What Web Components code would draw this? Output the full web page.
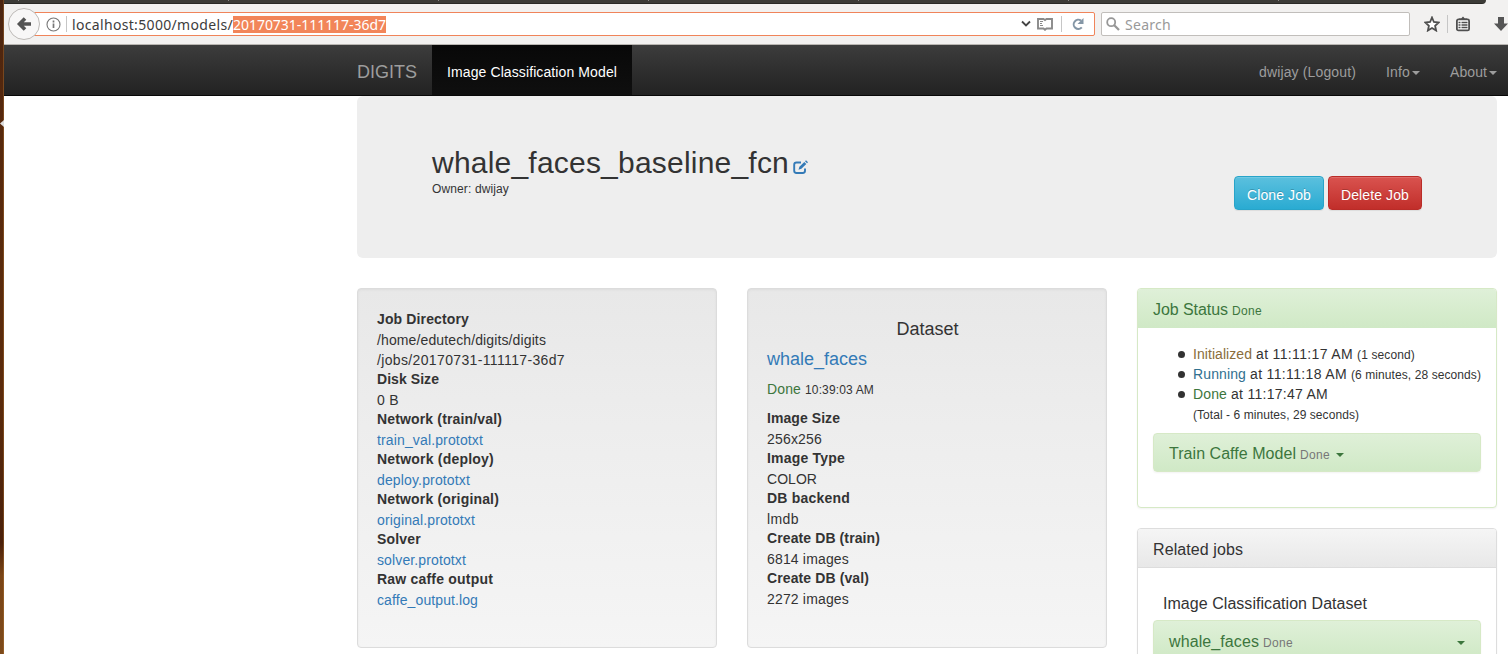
<!DOCTYPE html>
<html lang="en">
<head>
<meta charset="utf-8">
<title>whale_faces_baseline_fcn</title>
<style>
html,body{margin:0;height:100%;overflow:hidden;background:#fff}
body{font:14px/20px "Liberation Sans",Arial,sans-serif;color:#333}
</style>
</head>
<body>
<digits-window></digits-window>
<script>
function define(name, html, after) {
  const t = document.createElement('template');
  t.innerHTML = html;
  customElements.define(name, class extends HTMLElement {
    constructor() {
      super();
      this.attachShadow({mode: 'open'}).append(t.content.cloneNode(true));
    }
    connectedCallback() { if (after) after(this); }
  });
}

// A single-line label tracked to occupy the width in its "w" attribute.
define('ui-text', `<style>:host{display:inline-block;white-space:pre}span{display:inline-block}</style><span><slot></slot></span>`, el => {
  const w = parseFloat(el.getAttribute('w'));
  const span = el.shadowRoot.querySelector('span');
  const n = el.textContent.length;
  if (!w || !n) return;
  span.style.letterSpacing = ((w - span.getBoundingClientRect().width) / n) + 'px';
  el.style.width = w + 'px';
});

define('ui-caret', `<style>:host{display:inline-block;width:0;height:0;border:4px solid transparent;border-top-color:currentColor;border-bottom:0;vertical-align:middle;flex:none}</style>`);

define('browser-bar', `<style>
:host{display:block;height:45px;background:#f2f1f0;box-sizing:border-box;border-bottom:1px solid #b9b6b2;font:14px/18px "Noto Sans","Open Sans",sans-serif;color:#3c3c3c}
.tabs{height:4px;width:1482px;background:repeating-linear-gradient(90deg,transparent 0 14px,#8a8984 14px 15px,transparent 15px 210px) 0 0/100% 1px no-repeat,linear-gradient(#3c3b37 0 3px,#2a2926 3px);border-radius:0 0 7px 0}
.row{display:flex;align-items:center;height:40px;overflow:hidden}
.back{width:30px;height:30px;border:1px solid #bdbab7;border-radius:50%;background:#f8f7f7;margin-left:4px;flex:none;z-index:1;display:grid;place-items:center}
.url{box-sizing:border-box;width:1063px;margin-left:-8px;height:24px;border:1px solid #f0845a;border-radius:0 2px 2px 0;background:#fff;display:flex;align-items:center;padding-left:13px;flex:none}
.sep{width:1px;height:16px;background:#c6c6c6;flex:none}
.txt{display:flex;margin-left:5px;width:946px;flex:none}
.sel{background:#f28559;color:#fff;height:17px;line-height:17px;display:block}
.pre{height:17px;line-height:17px}
.search{box-sizing:border-box;width:309px;height:24px;border:1px solid #c1bebb;border-radius:2px;background:#fff;margin-left:6px;display:flex;align-items:center;padding-left:4px;color:#999;flex:none}
svg{display:block;flex:none}
</style>
<div class="tabs"></div>
<div class="row">
 <div class="back"><svg width="16" height="16" viewBox="0 0 16 16"><path d="M15 8H4.500M9 2.500 3.500 8 9 13.500" fill="none" stroke="#545454" stroke-width="3.600"/></svg></div>
 <div class="url">
  <svg width="15" height="15" viewBox="0 0 15 15" fill="none" stroke="#777"><circle cx="7.5" cy="7.5" r="6.5" stroke-width="1.1"/><path d="M7.5 6.5V11M7.5 3.5v2" stroke-width="1.7"/></svg>
  <i class="sep" style="margin-left:5px"></i>
  <div class="txt"><ui-text class="pre" w="161">localhost:5000/models/</ui-text><ui-text class="sel" w="153">20170731-111117-36d7</ui-text></div>
  <svg style="margin-left:3px" width="10" height="8" viewBox="0 0 10 8"><path d="M1 1.500 5 5.500 9 1.500" fill="none" stroke="#444" stroke-width="1.800"/></svg>
  <svg style="margin-left:6px" width="16" height="14" viewBox="0 0 16 14" fill="none" stroke="#8a8a8a"><path d="M1 2H6.500L8 3 9.500 2H15V11.500H9.500L8 12.800 6.500 11.500H1Z" stroke-width="1.900"/><path d="M3 4.500h3M3 6.500h2M3 8.500h3" stroke-width="1"/></svg>
  <i class="sep" style="margin-left:8px"></i>
  <svg style="margin-left:9px" width="14" height="14" viewBox="0 0 14 14"><path d="M10.800 10.300A4.600 4.600 0 1 1 10 3.600" fill="none" stroke="#8496a6" stroke-width="2"/><path d="M12.500 1v6H6.500Z" fill="#8496a6"/></svg>
 </div>
 <div class="search"><svg width="14" height="14" viewBox="0 0 14 14" fill="none" stroke="#979797"><circle cx="5.200" cy="5.200" r="4" stroke-width="1.800"/><path d="m8 8 5 5" stroke-width="2.300"/></svg><ui-text w="46" style="margin-left:5px;padding-top:1px">Search</ui-text></div>
 <svg style="margin-left:14px" width="16" height="16" viewBox="0 0 16 16"><path d="m8 1.500 1.900 4.500 4.800.5-3.600 3.300 1 4.700L8 12l-4.100 2.500 1-4.700L1.300 6.500l4.800-.5Z" fill="#fff" stroke="#4f4f4f" stroke-width="1.800"/></svg>
 <i class="sep" style="margin-left:7px;height:18px"></i>
 <svg style="margin-left:8px" width="14" height="16" viewBox="0 0 14 16"><rect x=".9" y="3.400" width="12.200" height="11" rx="1.500" fill="#fff" stroke="#4f4f4f" stroke-width="1.800"/><path d="M3 4V2.500H5.200L7 .5 8.800 2.500H11V4Z" fill="#4f4f4f"/><path d="M2.500 6.500h2M5.500 6.500h6M2.500 9h2M5.500 9h6M2.500 11.500h2M5.500 11.500h6" stroke="#4f4f4f" stroke-width="1.300"/></svg>
 <svg style="margin-left:24px" width="14" height="16" viewBox="0 0 14 16"><path d="M4 1h6v6.500h4L7 15 0 7.500h4Z" fill="#555"/></svg>
</div>`);

define('nav-bar', `<style>
:host{display:flex;height:50px;border-bottom:1px solid #080808;background:linear-gradient(#3c3c3c,#222);color:#9d9d9d;padding-left:353px}
div{padding-top:17px;box-sizing:border-box;height:50px}
.brand{font-size:18px;width:75px}
.tab{width:200px;padding-left:15px;background:linear-gradient(#080808,#0f0f0f);color:#fff}
.user{margin-left:627px;width:127px}.info{width:64px}
ui-caret{margin-left:2px;vertical-align:2px}
</style>
<div class="brand"><ui-text w="60">DIGITS</ui-text></div>
<div class="tab"><ui-text w="170">Image Classification Model</ui-text></div>
<div class="user"><ui-text w="97">dwijay (Logout)</ui-text></div>
<div class="info"><ui-text w="24">Info</ui-text><ui-caret></ui-caret></div>
<div><ui-text w="37">About</ui-text><ui-caret></ui-caret></div>`);

define('job-button', `<style>
:host{display:block;box-sizing:border-box;height:34px;padding:8px 12px 4px;border:1px solid #28a4c9;border-radius:4px;background:linear-gradient(#5bc0de,#2aabd2);color:#fff;text-shadow:0 -1px 0 rgba(0,0,0,.2);box-shadow:inset 0 1px 0 rgba(255,255,255,.15),0 1px 1px rgba(0,0,0,.075);line-height:20px;white-space:nowrap}
:host([kind=danger]){border-color:#b92c28;background:linear-gradient(#d9534f,#c12e2a)}
</style><slot></slot>`);

define('job-header', `<style>
:host{display:flex;justify-content:space-between;box-sizing:border-box;height:162px;border-radius:6px;background:#eee;padding:50px 75px 0}
h2{margin:0;font-size:30px;line-height:33px;font-weight:400;display:flex}
svg{margin:14px 0 0 4px}
small{font-size:12px;display:block;line-height:20px}
.b{display:flex;gap:4px;padding-top:30px}
</style>
<div><h2><ui-text w="357">whale_faces_baseline_fcn</ui-text><svg width="15" height="15" viewBox="0 0 15 15"><path d="M8 2.500H3.500Q1.200 2.500 1.200 4.800v6Q1.200 13 3.500 13h6.200Q12 13 12 10.800V8.500" fill="none" stroke="#337ab7" stroke-width="1.900"/><path d="m5.500 9.800.9-3 4.900-4.900 2 2-4.900 4.900ZM12 1.200l1-1 2 2-1 1Z" fill="#337ab7"/></svg></h2>
<small><ui-text w="77">Owner: dwijay</ui-text></small></div>
<div class="b"><job-button><ui-text w="64">Clone Job</ui-text></job-button><job-button kind="danger"><ui-text w="68">Delete Job</ui-text></job-button></div>`);

define('info-well', `<style>
:host{display:block;box-sizing:border-box;width:360px;height:360px;padding:19px;border:1px solid #dcdcdc;border-radius:4px;background:linear-gradient(#e8e8e8,#f5f5f5);box-shadow:inset 0 1px 3px rgba(0,0,0,.05),0 1px 0 rgba(255,255,255,.1)}
</style><slot></slot>`);

define('info-item', `<style>
:host{display:block}
b{display:block}
div{padding-top:1px;margin-bottom:-1px}
:host([link]) div{color:#337ab7}
</style><b><slot name="label"></slot></b><div><slot></slot></div>`);

define('ui-panel', `<style>
:host{display:block;box-sizing:border-box;border:1px solid #ddd;border-radius:4px;box-shadow:0 1px 2px rgba(0,0,0,.05);background:#fff}
header{box-sizing:border-box;height:39px;padding:11px 15px 7px;font-size:16px;border-bottom:1px solid #ddd;background:linear-gradient(#f5f5f5,#e8e8e8);border-radius:3px 3px 0 0}
:host([kind=success]){border-color:#d6e9c6}
:host([kind=success]) header{color:#3c763d;border-color:#d0e9c6;background:linear-gradient(#dff0d8,#d0e9c6)}
</style><header><slot name="title"></slot></header><slot></slot>`);

define('task-row', `<style>
:host{display:flex;align-items:baseline;box-sizing:border-box;height:39px;margin:0 15px;border:1px solid #d6e9c6;border-radius:4px;padding:10px 15px 0;font-size:16px;color:#3c763d;background:linear-gradient(#dff0d8,#d0e9c6);box-shadow:0 1px 2px rgba(0,0,0,.05)}
small{font-size:12px;color:#777;margin-left:4px}
ui-caret{margin-left:6px;align-self:flex-start;margin-top:9px}
:host([wide]){padding-top:11px}
:host([wide]) ui-caret{margin-left:auto}
</style><slot></slot><small><ui-text w="30">Done</ui-text></small><ui-caret></ui-caret>`);

define('status-line', `<style>
:host{display:flex;height:20px;padding-left:40px}
i{width:7px;height:7px;border-radius:50%;background:#333;margin:7px 8px 0 0;flex:none}
.c{white-space:nowrap}
</style><i></i><div class="c"><slot></slot></div>`);

define('digits-window', `<style>
:host{display:flex;height:654px;overflow:hidden}
aside{width:4px;flex:none;background:linear-gradient(90deg,transparent 3px,rgba(190,130,60,.35) 3px),linear-gradient(#4a2410,#57290d 20%,#5b2b0c 60%,#4a200a 83%,#7a4517 88%,#7d4a1b);display:flex;padding-top:119px;box-sizing:border-box}
aside svg{display:block}
.main{width:1504px;flex:none}
.page{width:1140px;margin-left:353px}
.cols{display:grid;grid-template-columns:360px 360px 360px;gap:30px;margin-top:30px;align-items:start}
.t{font-size:18px;text-align:center;padding:11px 0 0 1px}
.w{font-size:18px;color:#337ab7;margin-top:10px}
.d{margin:10px 0 8px}
small{font-size:12px}
.g{color:#3c763d}.y{color:#8a6d3b}.b{color:#31708f}
.s{margin-left:4px}
.list{padding-top:16px;height:105px;box-sizing:border-box}
.total{padding-left:55px}
.rel{margin-top:20px;height:200px}
.h{font-size:16px;padding:26px 25px 6px}
</style>
<aside><svg width="4" height="9" viewBox="0 0 4 9"><path d="M4 1v7L0 4.500Z" fill="#ddd"/></svg></aside>
<div class="main"><browser-bar></browser-bar><nav-bar></nav-bar>
<div class="page"><job-header></job-header>
<div class="cols">
<info-well style="padding-top:20px">
<info-item><ui-text slot="label" w="92">Job Directory</ui-text><ui-text w="169">/home/edutech/digits/digits</ui-text><br><ui-text w="188">/jobs/20170731-111117-36d7</ui-text></info-item>
<info-item><ui-text slot="label" w="62">Disk Size</ui-text><ui-text w="22">0 B</ui-text></info-item>
<info-item link><ui-text slot="label" w="125">Network (train/val)</ui-text><ui-text w="106">train_val.prototxt</ui-text></info-item>
<info-item link><ui-text slot="label" w="117">Network (deploy)</ui-text><ui-text w="93">deploy.prototxt</ui-text></info-item>
<info-item link><ui-text slot="label" w="122">Network (original)</ui-text><ui-text w="98">original.prototxt</ui-text></info-item>
<info-item link><ui-text slot="label" w="44">Solver</ui-text><ui-text w="89">solver.prototxt</ui-text></info-item>
<info-item link><ui-text slot="label" w="116">Raw caffe output</ui-text><ui-text w="101">caffe_output.log</ui-text></info-item>
</info-well>
<info-well>
<div class="t"><ui-text w="62">Dataset</ui-text></div>
<div class="w"><ui-text w="100">whale_faces</ui-text></div>
<div class="d"><ui-text class="g" w="34">Done</ui-text><small class="s"><ui-text w="69">10:39:03 AM</ui-text></small></div>
<info-item><ui-text slot="label" w="73">Image Size</ui-text><ui-text w="55">256x256</ui-text></info-item>
<info-item><ui-text slot="label" w="78">Image Type</ui-text><ui-text w="50">COLOR</ui-text></info-item>
<info-item><ui-text slot="label" w="83">DB backend</ui-text><ui-text w="32">lmdb</ui-text></info-item>
<info-item><ui-text slot="label" w="113">Create DB (train)</ui-text><ui-text w="82">6814 images</ui-text></info-item>
<info-item><ui-text slot="label" w="102">Create DB (val)</ui-text><ui-text w="82">2272 images</ui-text></info-item>
</info-well>
<div>
<ui-panel kind="success" style="height:220px"><div slot="title"><ui-text w="75">Job Status</ui-text><small class="s"><ui-text w="30">Done</ui-text></small></div>
<div class="list">
<status-line><ui-text class="y" w="59">Initialized</ui-text><ui-text class="s" w="97">at 11:11:17 AM</ui-text><small class="s"><ui-text w="58">(1 second)</ui-text></small></status-line>
<status-line><ui-text class="b" w="53">Running</ui-text><ui-text class="s" w="97">at 11:11:18 AM</ui-text><small class="s"><ui-text w="130">(6 minutes, 28 seconds)</ui-text></small></status-line>
<status-line><ui-text class="g" w="34">Done</ui-text><ui-text class="s" w="97">at 11:17:47 AM</ui-text></status-line>
<div class="total"><small><ui-text w="166">(Total - 6 minutes, 29 seconds)</ui-text></small></div>
</div>
<task-row><ui-text w="127">Train Caffe Model</ui-text></task-row>
</ui-panel>
<ui-panel class="rel"><ui-text slot="title" w="90">Related jobs</ui-text>
<div class="h"><ui-text w="204">Image Classification Dataset</ui-text></div>
<task-row wide><ui-text w="90">whale_faces</ui-text></task-row>
</ui-panel>
</div>
</div></div></div>`);
</script>
</body>
</html>
